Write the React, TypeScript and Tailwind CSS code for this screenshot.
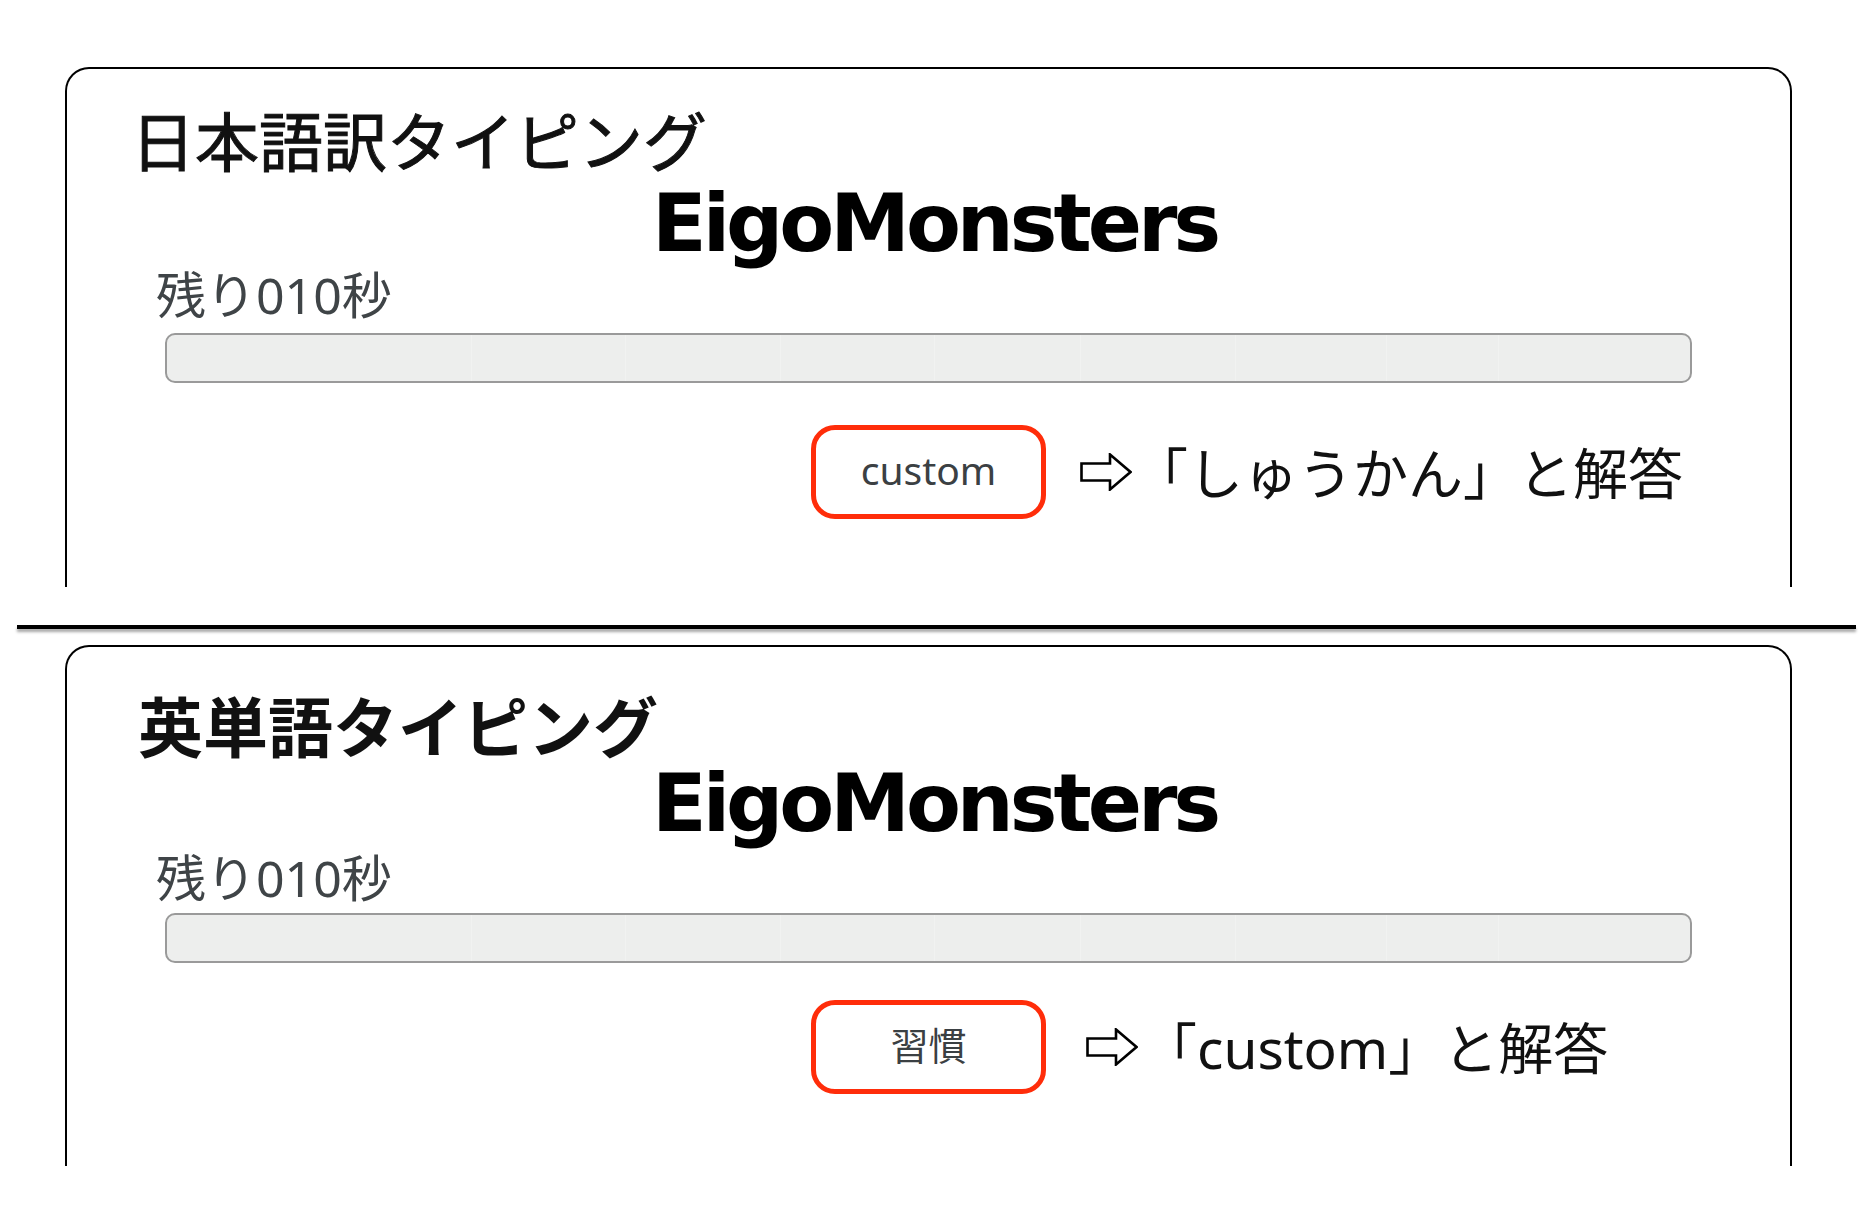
import React from "react";

const JP = { fontFamily: '"Noto Sans", "Noto Sans CJK JP", sans-serif' };
const EIGO = { fontFamily: '"DejaVu Sans", "Liberation Sans", sans-serif' };

function Arrow() {
  return (
    <svg width="52" height="38" viewBox="0 0 52 38" className="shrink-0">
      <path
        d="M1.5 10.5 H30 V1.5 L50.5 19 L30 36.5 V27.5 H1.5 Z"
        fill="white"
        stroke="black"
        strokeWidth="2.6"
        strokeLinejoin="miter"
      />
    </svg>
  );
}

function Bar() {
  const lines = [304, 458, 613, 767, 913, 1068, 1219, 1331];
  return (
    <div className="relative h-[50px] rounded-[10px] border-2 border-[#9a9a9a] bg-[#edeeed]">
      {lines.map((x) => (
        <div
          key={x}
          className="absolute top-0 bottom-0 w-px bg-[#f1f2f1]"
          style={{ left: x }}
        />
      ))}
    </div>
  );
}

function Panel({
  title,
  titleCls,
  eigoCls,
  timerCls,
  barCls,
  rowCls,
  boxText,
  boxTextCls,
  answer,
  arrowCls,
}: {
  title: string;
  titleCls: string;
  eigoCls: string;
  timerCls: string;
  barCls: string;
  rowCls: string;
  boxText: string;
  boxTextCls: string;
  answer: React.ReactNode;
  arrowCls: string;
}) {
  return (
    <div className="flex flex-col">
      <div className={titleCls} style={JP}>
        {title}
      </div>
      <div className={eigoCls} style={EIGO}>
        EigoMonsters
      </div>
      <div className={timerCls} style={JP}>
        残り010秒
      </div>
      <div className={barCls}>
        <Bar />
      </div>
      <div className={rowCls}>
        <div />
        <div className="flex h-[94px] w-[235px] items-center justify-center rounded-[24px] border-[5px] border-[#ff2d0a] bg-white pb-[5px]">
          <span className={boxTextCls} style={JP}>
            {boxText}
          </span>
        </div>
        <div className={arrowCls} style={JP}>
          <Arrow />
          <span className="text-[55px] leading-none text-[#111111]">{answer}</span>
        </div>
      </div>
    </div>
  );
}

export default function App() {
  return (
    <div className="h-[1232px] w-full overflow-hidden bg-white">
      <div className="ml-[65px] mt-[67px] h-[520px] w-[1727px] rounded-t-[24px] border-2 border-b-0 border-black">
        <Panel
          title="日本語訳タイピング"
          titleCls="pl-[64px] pt-[41px] text-[64px] font-normal leading-none text-[#111111] [-webkit-text-stroke:1px_#111111]"
          eigoCls="mt-[10px] pl-[12px] text-center text-[80px] font-bold leading-none tracking-[-4px] text-black"
          timerCls="mt-[6px] pl-[89px] text-[50px] leading-none text-[#3f4447]"
          barCls="mt-[13px] mx-[98px]"
          rowCls="mt-[42px] grid grid-cols-[1fr_auto_1fr] items-center"
          boxText="custom"
          boxTextCls="text-[39px] leading-none text-[#3b4043]"
          answer="「しゅうかん」と解答"
          arrowCls="ml-[34px] flex items-center gap-[1px]"
        />
      </div>

      <div className="ml-[17px] mr-[8px] mt-[38px] h-[4px] bg-black shadow-[0_3px_3px_rgba(0,0,0,0.35)]" />

      <div className="ml-[65px] mt-[16px] h-[521px] w-[1727px] rounded-t-[24px] border-2 border-b-0 border-black">
        <Panel
          title="英単語タイピング"
          titleCls="pl-[71px] pt-[48px] text-[65px] font-bold leading-none text-[#111111]"
          eigoCls="mt-[4px] pl-[12px] text-center text-[80px] font-bold leading-none tracking-[-4px] text-black"
          timerCls="mt-[9px] pl-[89px] text-[50px] leading-none text-[#3f4447]"
          barCls="mt-[10px] mx-[98px]"
          rowCls="mt-[37px] grid grid-cols-[1fr_auto_1fr] items-center"
          boxText="習慣"
          boxTextCls="text-[38px] leading-none text-[#3b4043]"
          answer="「custom」と解答"
          arrowCls="ml-[40px] flex items-center gap-[4px]"
        />
      </div>
    </div>
  );
}
